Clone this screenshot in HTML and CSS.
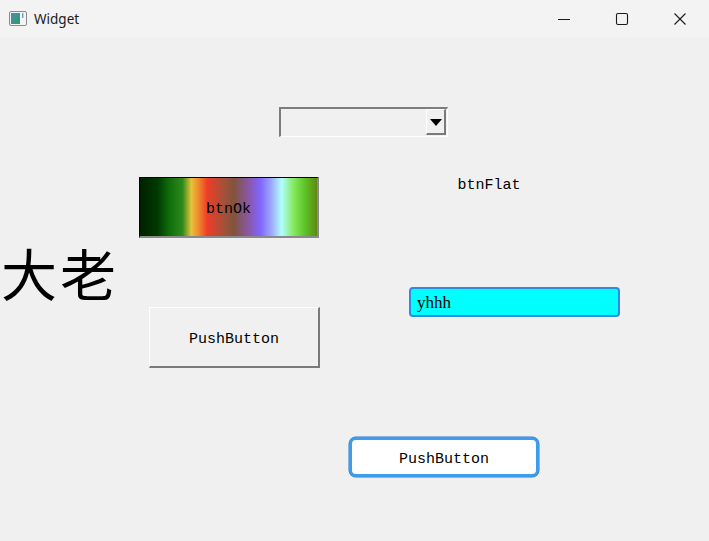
FILE: index.html
```html
<!DOCTYPE html>
<html>
<head>
<meta charset="utf-8">
<link rel="stylesheet" href="styles.css">
</head>
<body>
<div class="window">
  <div class="titlebar">
    <div class="title-left">
      <svg class="app-icon" width="18" height="15" viewBox="0 0 18 15">
        <defs>
          <linearGradient id="g" x1="0" y1="0" x2="1" y2="1">
            <stop offset="0" stop-color="#4a8fb0"/>
            <stop offset="1" stop-color="#2f9a6a"/>
          </linearGradient>
        </defs>
        <rect x="0.5" y="0.5" width="17" height="14" rx="1.5" fill="#f4f4f4" stroke="#8a8a8a"/>
        <rect x="2" y="2" width="9" height="11" fill="url(#g)"/>
        <rect x="13" y="2" width="1.4" height="5" fill="#6aa0c0"/>
      </svg>
      <span class="title">Widget</span>
    </div>
    <div class="controls">
      <div class="ctl">
        <svg width="14" height="14" viewBox="0 0 14 14"><path d="M1 7.5H13" stroke="#1a1a1a" stroke-width="1"/></svg>
      </div>
      <div class="ctl">
        <svg width="14" height="14" viewBox="0 0 14 14"><rect x="1.5" y="1.5" width="11" height="11" rx="1.5" fill="none" stroke="#1a1a1a" stroke-width="1.1"/></svg>
      </div>
      <div class="ctl">
        <svg width="14" height="14" viewBox="0 0 14 14"><path d="M1.5 1.5L12.5 12.5M12.5 1.5L1.5 12.5" stroke="#1a1a1a" stroke-width="1.1"/></svg>
      </div>
    </div>
  </div>
  <div class="canvas">
    <div class="combo">
      <div class="combo-btn"><span class="arrow"></span></div>
    </div>
    <div class="btn-ok">btnOk</div>
    <div class="btn-flat">btnFlat</div>
    <div class="big-label">大老</div>
    <div class="line-edit">yhhh</div>
    <div class="push1">PushButton</div>
    <div class="push2">PushButton</div>
  </div>
</div>
</body>
</html>
```

FILE: styles.css
```css
html, body {
  margin: 0;
  padding: 0;
  background: #f0f0f0;
}
.window {
  width: 709px;
  height: 541px;
  display: flex;
  flex-direction: column;
  overflow: hidden;
}
.titlebar {
  height: 37px;
  background: #f3f3f3;
  display: flex;
  align-items: center;
  justify-content: space-between;
  flex: none;
}
.title-left {
  display: flex;
  align-items: center;
  padding-left: 9px;
  gap: 7px;
}
.app-icon { display: block; }
.title {
  font-family: "Noto Sans", "Open Sans", sans-serif;
  font-size: 13.5px;
  color: #1a1a1a;
  margin-top: 0px;
}
.controls {
  display: flex;
  height: 37px;
}
.ctl {
  width: 58px;
  height: 37px;
  display: flex;
  align-items: center;
  justify-content: center;
}
.ctl svg { display: block; }
.canvas {
  position: relative;
  flex: 1;
  background: #f0f0f0;
  font-family: "Liberation Mono", "Courier New", monospace;
  font-size: 15px;
  color: #000;
}
.combo {
  position: absolute;
  left: 279px;
  top: 70px;
  width: 169px;
  height: 30px;
  box-sizing: border-box;
  background: #f0f0f0;
  border-style: solid;
  border-width: 2px 1px 1px 2px;
  border-color: #7d7d7d #ffffff #ffffff #7d7d7d;
  display: flex;
  justify-content: flex-end;
  align-items: stretch;
  padding: 0 1px 1px 0;
}
.combo-btn {
  width: 20px;
  box-sizing: border-box;
  border-style: solid;
  border-width: 1px 2px 2px 1px;
  border-color: #ffffff #7a7a7a #7a7a7a #ffffff;
  display: flex;
  align-items: center;
  justify-content: center;
  background: #f0f0f0;
}
.arrow {
  width: 0;
  height: 0;
  border-left: 6px solid transparent;
  border-right: 6px solid transparent;
  border-top: 7px solid #000;
  margin-top: 1px;
}
.btn-ok {
  position: absolute;
  left: 139px;
  top: 140px;
  width: 180px;
  height: 61px;
  box-sizing: border-box;
  border-style: solid;
  border-width: 1px 2px 2px 1px;
  border-color: #000 #8a8a8a #8a8a8a #000;
  background: linear-gradient(90deg,
    #002000 0%, #003a00 10%, #0d6a0a 16%, #2f8a1c 24%, #e8c23a 29%,
    #f08a2e 33%, #ee3d28 38%, #a85038 47%, #80543c 53%,
    #8a58b0 62%, #7f66ff 68%, #9ba6ff 74%, #b0ffff 80%,
    #84e85a 87%, #5ec428 93%, #5e8a10 100%);
  display: flex;
  align-items: center;
  justify-content: center;
  padding-top: 4px;
}
.btn-flat {
  position: absolute;
  left: 404px;
  top: 132px;
  width: 170px;
  height: 30px;
  display: flex;
  align-items: center;
  justify-content: center;
  padding-top: 2px;
  box-sizing: border-box;
}
.big-label {
  position: absolute;
  left: 1px;
  top: 207px;
  font-family: "Noto Sans CJK SC", "Noto Sans CJK JP", serif;
  font-size: 56px;
  line-height: 1;
  font-weight: 400;
  letter-spacing: 3px;
}
.line-edit {
  position: absolute;
  left: 409px;
  top: 250px;
  width: 211px;
  height: 30px;
  box-sizing: border-box;
  border: 2px solid #2f8ae0;
  border-radius: 4px;
  background: #00ffff;
  font-family: "Liberation Serif", "Times New Roman", serif;
  font-size: 17px;
  padding-left: 6px;
  padding-top: 2px;
  display: flex;
  align-items: center;
}
.push1 {
  position: absolute;
  left: 149px;
  top: 270px;
  width: 171px;
  height: 61px;
  box-sizing: border-box;
  border-style: solid;
  border-width: 1px 2px 2px 1px;
  border-color: #ffffff #7a7a7a #7a7a7a #ffffff;
  background: #f0f0f0;
  display: flex;
  align-items: center;
  justify-content: center;
  padding-top: 4px;
}
.push2 {
  position: absolute;
  left: 349px;
  top: 400px;
  width: 190px;
  height: 40px;
  box-sizing: border-box;
  border: 3px solid #3d9ceb;
  border-radius: 7px;
  box-shadow: 0 0 0 0.5px #2a78c8;
  background: #ffffff;
  display: flex;
  align-items: center;
  justify-content: center;
  padding-top: 4px;
}
```
